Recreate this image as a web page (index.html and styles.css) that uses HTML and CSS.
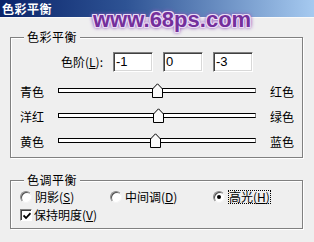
FILE: index.html
```html
<!DOCTYPE html>
<html>
<head>
<meta charset="utf-8">
<link rel="stylesheet" href="styles.css">
</head>
<body>
<div class="win">
  <div class="titlebar"><span class="title">色彩平衡</span></div>
  <div class="watermark">www.68ps.com</div>
  <div class="content">
    <div class="group g1">
      <span class="legend">色彩平衡</span>
      <div class="levels">
        <span class="lvl-label">色阶(<u>L</u>):</span>
        <div class="field">-1</div>
        <div class="field">0</div>
        <div class="field">-3</div>
      </div>
      <div class="sliders">
        <div class="srow">
          <span class="sl">青色</span>
          <div class="track"><svg class="thumb" style="left:93px" width="11" height="15" viewBox="0 0 11 15"><path d="M0.5 6 L5.5 0.8 L10.5 6 V14.5 H0.5 Z" fill="#fafafa" stroke="#000" stroke-width="1"/></svg></div>
          <span class="sr">红色</span>
        </div>
        <div class="srow">
          <span class="sl">洋红</span>
          <div class="track"><svg class="thumb" style="left:94px" width="11" height="15" viewBox="0 0 11 15"><path d="M0.5 6 L5.5 0.8 L10.5 6 V14.5 H0.5 Z" fill="#fafafa" stroke="#000" stroke-width="1"/></svg></div>
          <span class="sr">绿色</span>
        </div>
        <div class="srow">
          <span class="sl">黄色</span>
          <div class="track"><svg class="thumb" style="left:91px" width="11" height="15" viewBox="0 0 11 15"><path d="M0.5 6 L5.5 0.8 L10.5 6 V14.5 H0.5 Z" fill="#fafafa" stroke="#000" stroke-width="1"/></svg></div>
          <span class="sr">蓝色</span>
        </div>
      </div>
    </div>
    <div class="group g2">
      <span class="legend">色调平衡</span>
      <div class="radios">
        <div class="opt o1"><span class="radio"></span><span class="otext">阴影(<u>S</u>)</span></div>
        <div class="opt o2"><span class="radio"></span><span class="otext">中间调(<u>D</u>)</span></div>
        <div class="opt o3"><span class="radio on"></span><span class="otext focus">高光(<u>H</u>)</span></div>
      </div>
      <div class="check">
        <span class="cbox"><svg width="8" height="8" viewBox="0 0 8 8"><path d="M0.5 3.5 L3 6 L7.5 1.2" fill="none" stroke="#000" stroke-width="1.8"/></svg></span>
        <span class="otext">保持明度(<u>V</u>)</span>
      </div>
    </div>
  </div>
</div>
</body>
</html>
```

FILE: styles.css
```css
html, body {
  margin: 0;
  padding: 0;
}
body {
  width: 314px;
  height: 242px;
  overflow: hidden;
  background: #efefef;
  font-family: "Noto Sans CJK SC", "Liberation Sans", sans-serif;
  font-size: 12px;
  color: #000;
}
.win {
  position: relative;
  width: 314px;
  height: 242px;
}
.titlebar {
  height: 18px;
  background: linear-gradient(to right, #0a246a 0%, #2e5394 40%, #a6caf0 100%);
  border-bottom: 1px solid #fafafa;
  box-sizing: border-box;
}
.title {
  display: block;
  padding-left: 2px;
  color: #fff;
  font-weight: 700;
  font-size: 12px;
  line-height: 18px;
  letter-spacing: 0.5px;
}
.watermark {
  position: absolute;
  left: 93px;
  top: 9px;
  font-family: "Liberation Sans", Arial, sans-serif;
  font-weight: 700;
  font-size: 22px;
  line-height: 22px;
  color: #742f9c;
  text-shadow:
    1px 0 #eadcf4, -1px 0 #eadcf4, 0 1px #eadcf4, 0 -1px #eadcf4,
    1px 1px #eadcf4, -1px -1px #eadcf4, 1px -1px #eadcf4, -1px 1px #eadcf4,
    0 0 3px #7b3aa6, 0 0 4px #8e58b8, 0 0 5px #a070c8;
  white-space: nowrap;
}
.content {
  padding-left: 10px;
}
.group {
  position: relative;
  width: 293px;
  box-sizing: border-box;
  border: 1px solid #808080;
  box-shadow: inset 1px 1px #fff, 1px 1px #fff;
}
.g1 {
  margin-top: 19px;
  height: 121px;
}
.g2 {
  margin-top: 22px;
  height: 49px;
}
.legend {
  position: absolute;
  left: 13px;
  top: -8px;
  padding: 0 3px;
  background: #efefef;
  line-height: 14px;
  letter-spacing: 0.5px;
}
.levels {
  display: flex;
  align-items: center;
  margin-top: 14px;
  height: 20px;
}
.lvl-label {
  width: 92px;
  text-align: right;
  margin-right: 10px;
  line-height: 14px;
}
.field {
  width: 40px;
  height: 20px;
  box-sizing: border-box;
  margin-right: 10px;
  background: #fff;
  border-style: solid;
  border-width: 1px;
  border-color: #808080 #fff #fff #808080;
  box-shadow: inset 1px 1px #404040, inset -1px -1px #d8d8d8;
  font-family: "Liberation Sans", Arial, sans-serif;
  font-size: 13px;
  line-height: 18px;
  padding-left: 2px;
}
.sliders {
  margin-top: 10px;
  display: flex;
  flex-direction: column;
  gap: 5px;
}
.srow {
  display: flex;
  align-items: center;
  height: 20px;
  padding-left: 9px;
}
.sl {
  width: 38px;
  line-height: 14px;
}
.track {
  position: relative;
  align-self: flex-start;
  margin-top: 6px;
  width: 198px;
  height: 5px;
  box-sizing: border-box;
  background: #fff;
  border-top: 1px solid #000;
  border-bottom: 1px solid #000;
  border-left: 1px solid #000;
  border-right: 1px solid #808080;
}
.thumb {
  position: absolute;
  top: -6px;
  display: block;
}
.sr {
  margin-left: 14px;
  line-height: 14px;
}
.radios {
  display: flex;
  align-items: center;
  margin-top: 9px;
  height: 14px;
  padding-left: 9px;
}
.opt {
  display: flex;
  align-items: center;
}
.o1 { width: 90px; }
.o2 { width: 103px; }
.radio {
  position: relative;
  width: 12px;
  height: 12px;
  box-sizing: border-box;
  border-radius: 50%;
  background: #fff;
  border: 1px solid;
  border-color: #8a8a8a #f4f4f4 #f4f4f4 #8a8a8a;
  box-shadow: inset 1px 1px #505050;
  margin-right: 3px;
}
.radio.on::after {
  content: "";
  position: absolute;
  left: 3px;
  top: 3px;
  width: 4px;
  height: 4px;
  border-radius: 50%;
  background: #000;
}
.otext {
  line-height: 14px;
}
.focus {
  line-height: 12px;
  border: 1px dotted #000;
  padding: 0;
}
.check {
  display: flex;
  align-items: center;
  margin-top: 4px;
  height: 14px;
  padding-left: 9px;
}
.cbox {
  width: 12px;
  height: 12px;
  box-sizing: border-box;
  background: #fff;
  border: 1px solid;
  border-color: #808080 #fff #fff #808080;
  box-shadow: inset 1px 1px #404040;
  margin-right: 2px;
  display: flex;
  align-items: center;
  justify-content: center;
  padding: 1px 0 0 1px;
}
.cbox svg {
  display: block;
}
```
